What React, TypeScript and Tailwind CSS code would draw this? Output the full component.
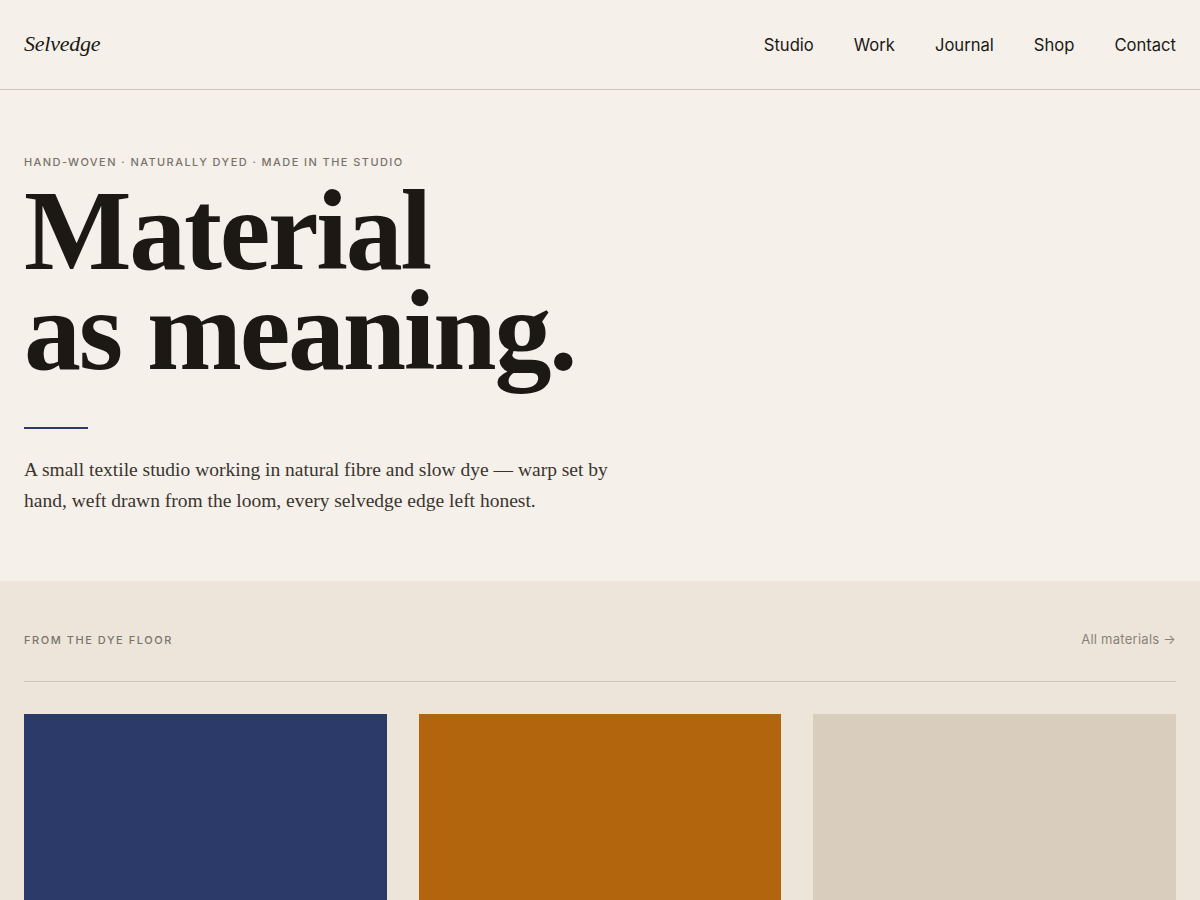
import React from "react";

const sans = "font-['Inter','Noto_Sans',sans-serif]";
const serif = "font-['Liberation_Serif','Times_New_Roman',serif]";

const navItems = ["Studio", "Work", "Journal", "Shop", "Contact"];

const swatches = ["bg-[#2c3a69]", "bg-[#b3650e]", "bg-[#d9cebd]"];

export default function App() {
  return (
    <div className="min-h-[900px] bg-[#f5f0ea] text-[#1c1914]">
      <header className="flex h-[90px] items-center justify-between border-b border-[#cfc7bc] px-6">
        <a className={`${serif} text-[22px] italic tracking-[-0.01em] text-[#1c1914] -mt-[3px]`}>Selvedge</a>
        <nav className={`${sans} mt-[1px] flex gap-10 text-[16.6px] text-[#1c1914]`}>
          {navItems.map((n) => (
            <a key={n}>{n}</a>
          ))}
        </nav>
      </header>

      <section className="px-6 pt-16 pb-[65px]">
        <p className={`${sans} text-[11px] font-medium leading-4 tracking-[0.13em] text-[#7a736b] uppercase`}>
          Hand-woven · Naturally dyed · Made in the studio
        </p>
        <h1 className={`${serif} mt-[11px] text-[114px] font-bold leading-[100px] tracking-[-0.02em] text-[#1c1914]`}>
          Material
          <br />
          as meaning.
        </h1>
        <div className="mt-[46px] h-[2px] w-16 bg-[#2c3a69]" />
        <p className={`${serif} mt-[25px] max-w-[620px] text-[19.5px] leading-[31px] text-[#3a352f]`}>
          A small textile studio working in natural fibre and slow dye — warp set by hand, weft drawn from the loom, every selvedge edge left honest.
        </p>
      </section>

      <section className="bg-[#ede5da] px-6 pt-[49px] pb-16">
        <div className="flex h-5 items-center justify-between">
          <p className={`${sans} text-[11px] font-medium tracking-[0.14em] text-[#7a736b] uppercase`}>From the dye floor</p>
          <a className={`${sans} text-[13px] tracking-[0.02em] text-[#8a8279]`}>All materials →</a>
        </div>
        <div className="mt-[31px] border-t border-[#cfc6b9]" />
        <div className="mt-8 grid grid-cols-3 gap-8">
          {swatches.map((c) => (
            <div key={c} className={`${c} h-[440px]`} />
          ))}
        </div>
      </section>
    </div>
  );
}
